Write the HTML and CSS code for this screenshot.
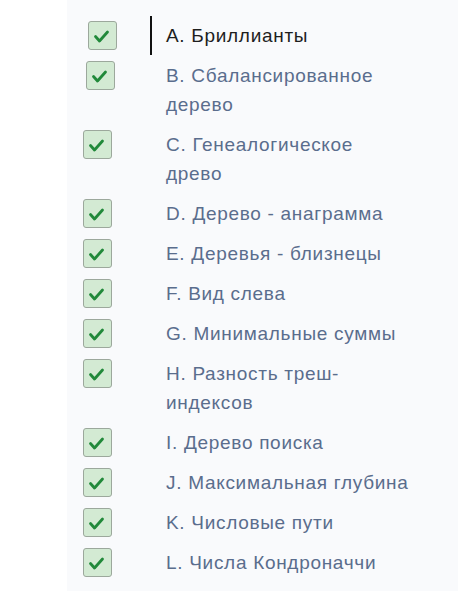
FILE: index.html
```html
<!DOCTYPE html>
<html lang="ru">
<head>
  <meta charset="UTF-8" />
  <meta name="viewport" content="width=device-width, initial-scale=1" />
  <title>Задачи</title>
  <link rel="stylesheet" href="styles.css">
</head>
<body>
  <div class="painel">
    <ul class="tarefas">
      <li class="tarefa atual shift-a">
        <span class="caixa"><svg viewBox="0 0 26 26"><path d="M6.5 14.5 L10.5 19 L18.5 10" /></svg></span>
        <span class="nome">A. Бриллианты</span>
      </li>
      <li class="tarefa shift-b">
        <span class="caixa"><svg viewBox="0 0 26 26"><path d="M6.5 14.5 L10.5 19 L18.5 10" /></svg></span>
        <span class="nome">B. Сбалансированное дерево</span>
      </li>
      <li class="tarefa">
        <span class="caixa"><svg viewBox="0 0 26 26"><path d="M6.5 14.5 L10.5 19 L18.5 10" /></svg></span>
        <span class="nome">C. Генеалогическое древо</span>
      </li>
      <li class="tarefa">
        <span class="caixa"><svg viewBox="0 0 26 26"><path d="M6.5 14.5 L10.5 19 L18.5 10" /></svg></span>
        <span class="nome">D. Дерево - анаграмма</span>
      </li>
      <li class="tarefa">
        <span class="caixa"><svg viewBox="0 0 26 26"><path d="M6.5 14.5 L10.5 19 L18.5 10" /></svg></span>
        <span class="nome">E. Деревья - близнецы</span>
      </li>
      <li class="tarefa">
        <span class="caixa"><svg viewBox="0 0 26 26"><path d="M6.5 14.5 L10.5 19 L18.5 10" /></svg></span>
        <span class="nome">F. Вид слева</span>
      </li>
      <li class="tarefa">
        <span class="caixa"><svg viewBox="0 0 26 26"><path d="M6.5 14.5 L10.5 19 L18.5 10" /></svg></span>
        <span class="nome">G. Минимальные суммы</span>
      </li>
      <li class="tarefa">
        <span class="caixa"><svg viewBox="0 0 26 26"><path d="M6.5 14.5 L10.5 19 L18.5 10" /></svg></span>
        <span class="nome">H. Разность треш-индексов</span>
      </li>
      <li class="tarefa">
        <span class="caixa"><svg viewBox="0 0 26 26"><path d="M6.5 14.5 L10.5 19 L18.5 10" /></svg></span>
        <span class="nome">I. Дерево поиска</span>
      </li>
      <li class="tarefa">
        <span class="caixa"><svg viewBox="0 0 26 26"><path d="M6.5 14.5 L10.5 19 L18.5 10" /></svg></span>
        <span class="nome">J. Максимальная глубина</span>
      </li>
      <li class="tarefa">
        <span class="caixa"><svg viewBox="0 0 26 26"><path d="M6.5 14.5 L10.5 19 L18.5 10" /></svg></span>
        <span class="nome">K. Числовые пути</span>
      </li>
      <li class="tarefa">
        <span class="caixa"><svg viewBox="0 0 26 26"><path d="M6.5 14.5 L10.5 19 L18.5 10" /></svg></span>
        <span class="nome">L. Числа Кондроначчи</span>
      </li>
    </ul>
  </div>
</body>
</html>
```

FILE: styles.css
```css
body {
  margin: 0;
  background: #fff;
  font-family: "Liberation Sans", Arial, sans-serif;
}

.painel {
  margin-left: 67px;
  width: 391px;
  min-height: 591px;
  background: #f9fafc;
  box-sizing: border-box;
  padding-top: 21px;
}

.tarefas {
  list-style: none;
  margin: 0;
  padding: 0;
  display: flex;
  flex-direction: column;
  gap: 11px;
}

.tarefa {
  display: flex;
  align-items: flex-start;
  padding-left: 16px;
}

.tarefa.shift-a .caixa {
  margin-left: 5px;
  margin-right: 49px;
}

.tarefa.shift-b .caixa {
  margin-left: 3px;
  margin-right: 51px;
}

.caixa {
  flex: none;
  width: 29px;
  height: 29px;
  margin-top: 0;
  margin-right: 54px;
  box-sizing: border-box;
  border: 1.5px solid #9ca89c;
  border-radius: 3px;
  background: #d3ead3;
}

.caixa svg {
  display: block;
  width: 26px;
  height: 26px;
}

.caixa path {
  fill: none;
  stroke: #21893a;
  stroke-width: 2.8;
  stroke-linecap: round;
  stroke-linejoin: round;
}

.nome {
  position: relative;
  width: 244px;
  font-size: 19px;
  letter-spacing: 0.7px;
  line-height: 29px;
  color: #5a6d8d;
}

.atual .nome {
  color: #1e1e1e;
}

.atual .nome::before {
  content: "";
  position: absolute;
  left: -16px;
  top: -5px;
  bottom: -5px;
  width: 2px;
  background: #111;
}
```
